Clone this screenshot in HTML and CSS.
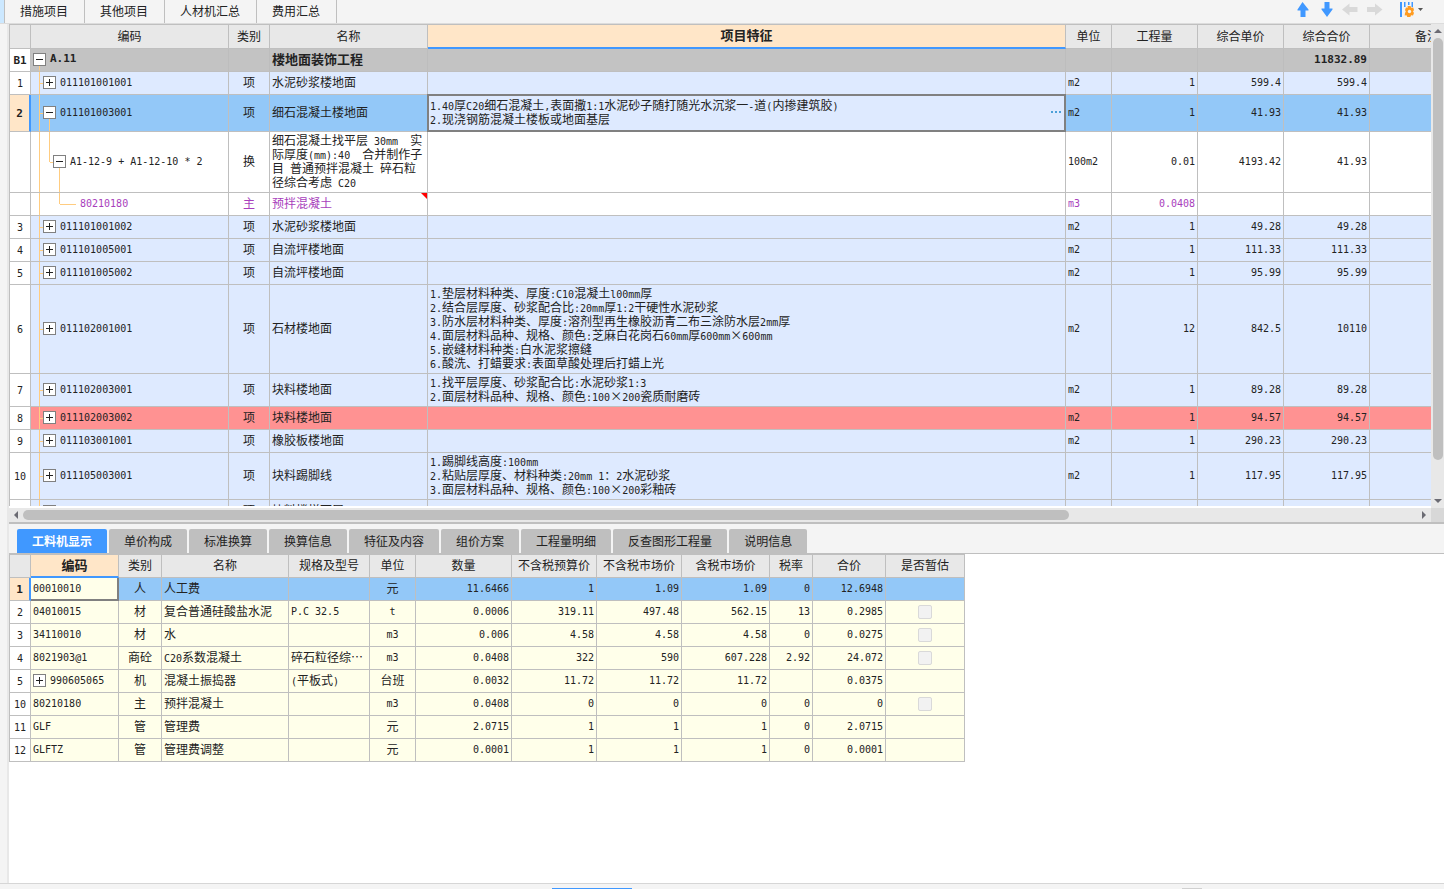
FILE: index.html
```html
<!DOCTYPE html>
<html lang="zh-CN">
<head>
<meta charset="utf-8">
<title>分部分项</title>
<link rel="stylesheet" href="styles.css">
</head>
<body>
<header class="toolbar">
  <nav class="nav">
    <span class="nav-edge"></span>
    <button type="button">措施项目</button>
    <button type="button">其他项目</button>
    <button type="button">人材机汇总</button>
    <button type="button">费用汇总</button>
  </nav>
  <div class="tools">
    <button type="button" aria-label="上移"><svg width="12" height="16" viewBox="0 0 12 16"><path fill="#4098ff" d="M5.500 1L11.500 8.500V9.500H8.500V16H3.500V9.500H.5V8.500z"/></svg></button>
    <button type="button" aria-label="下移"><svg width="12" height="16" viewBox="0 0 12 16"><path fill="#4098ff" d="M3.500 1H8.500V7.500H11.500V8.500L6 16L.5 8.500V7.500H3.500z"/></svg></button>
    <button type="button" aria-label="左移"><svg width="16" height="16" viewBox="0 0 16 16"><path fill="#d9d9d9" d="M0 8.500L7.500 2.500V6H15.500V11H7.500V14.500z"/></svg></button>
    <button type="button" aria-label="右移"><svg width="16" height="16" viewBox="0 0 16 16"><path fill="#d9d9d9" d="M15.500 8.500L8 2.500V6H0V11H8V14.500z"/></svg></button>
    <button type="button" aria-label="列设置"><svg width="24" height="16" viewBox="0 0 24 16"><path fill="#4098ff" d="M0 1h2v15H0zM4 1h1.500v5H4zM8 1h1.500v3H8zM11.500 1H13v5h-1.500z"/><path fill="#ff9c22" d="M7.500 5h3l.8 1.700 1.900-.2L14 9l-1 1.500 1 1.500-1 2.400-1.900-.1-.8 1.700h-3l-.8-1.700-1.800.1L5 12l.8-1.500L5 9l1-2.400 1.800.1z"/><circle cx="9.500" cy="10.500" r="1.700" fill="#f4f4f4"/><path fill="#555" d="M18 7h5l-2.500 3z"/></svg></button>
  </div>
</header>

<main class="body">
  <aside class="rail"></aside>
  <div class="panes">
    <section class="upper">
      <div class="viewport">
        <table class="sheet main-sheet">
          <colgroup><col class="w-idx"><col class="w-code"><col class="w-kind"><col class="w-name"><col><col class="w-unit"><col class="w-amt"><col class="w-amt"><col class="w-amt"><col class="w-note"></colgroup>
          <thead>
            <tr><th></th><th>编码</th><th>类别</th><th>名称</th><th class="active">项目特征</th><th>单位</th><th>工程量</th><th>综合单价</th><th>综合合价</th><th>备注</th></tr>
          </thead>
          <tbody>
            <tr class="group"><th class="n">B1</th><td class="tree root"><button class="box minus" type="button" aria-label="收起"></button><span class="n">A.11</span></td><td></td><td>楼地面装饰工程</td><td></td><td></td><td></td><td></td><td class="r n">11832.89</td><td></td></tr>
            <tr><th class="n">1</th><td class="tree lv1"><button class="box plus" type="button" aria-label="展开"></button><span class="n">011101001001</span></td><td class="c">项</td><td>水泥砂浆楼地面</td><td></td><td class="n">m2</td><td class="r n">1</td><td class="r n">599.4</td><td class="r n">599.4</td><td></td></tr>
            <tr class="selected tall"><th class="n current">2</th><td class="tree lv1 open"><button class="box minus" type="button" aria-label="收起"></button><span class="n">011101003001</span></td><td class="c">项</td><td>细石混凝土楼地面</td><td class="editing"><div class="edit"><span><i class="n">1.40</i>厚<i class="n">C20</i>细石混凝土<i class="n">,</i>表面撒<i class="n">1:1</i>水泥砂子随打随光水沉浆一<i class="n">-</i>道<i class="n">(</i>内掺建筑胶<i class="n">)</i><br><i class="n">2.</i>现浇钢筋混凝土楼板或地面基层</span><button class="more" type="button" aria-label="更多"><svg width="12" height="4" viewBox="0 0 12 4"><path fill="#4ba0d8" d="M0 1h2v2H0zM4 1h2v2H4zM8 1h2v2H8z"/></svg></button></div></td><td class="n">m2</td><td class="r n">1</td><td class="r n">41.93</td><td class="r n">41.93</td><td></td></tr>
            <tr class="plain"><th></th><td class="tree lv2"><button class="box minus" type="button" aria-label="收起"></button><span class="n">A1-12-9 + A1-12-10 * 2</span></td><td class="c">换</td><td>细石混凝土找平层<i class="n"> 30mm  </i>实<br>际厚度<i class="n">(mm):40  </i>合并制作子<br>目<i class="n"> </i>普通预拌混凝土<i class="n"> </i>碎石粒<br>径综合考虑<i class="n"> C20</i></td><td></td><td class="n">100m2</td><td class="r n">0.01</td><td class="r n">4193.42</td><td class="r n">41.93</td><td></td></tr>
            <tr class="plain material"><th></th><td class="tree lv3"><span class="n">80210180</span></td><td class="c">主</td><td class="flag">预拌混凝土</td><td></td><td class="n">m3</td><td class="r n">0.0408</td><td></td><td></td><td></td></tr>
            <tr><th class="n">3</th><td class="tree lv1"><button class="box plus" type="button" aria-label="展开"></button><span class="n">011101001002</span></td><td class="c">项</td><td>水泥砂浆楼地面</td><td></td><td class="n">m2</td><td class="r n">1</td><td class="r n">49.28</td><td class="r n">49.28</td><td></td></tr>
            <tr><th class="n">4</th><td class="tree lv1"><button class="box plus" type="button" aria-label="展开"></button><span class="n">011101005001</span></td><td class="c">项</td><td>自流坪楼地面</td><td></td><td class="n">m2</td><td class="r n">1</td><td class="r n">111.33</td><td class="r n">111.33</td><td></td></tr>
            <tr><th class="n">5</th><td class="tree lv1"><button class="box plus" type="button" aria-label="展开"></button><span class="n">011101005002</span></td><td class="c">项</td><td>自流坪楼地面</td><td></td><td class="n">m2</td><td class="r n">1</td><td class="r n">95.99</td><td class="r n">95.99</td><td></td></tr>
            <tr><th class="n">6</th><td class="tree lv1"><button class="box plus" type="button" aria-label="展开"></button><span class="n">011102001001</span></td><td class="c">项</td><td>石材楼地面</td><td><i class="n">1.</i>垫层材料种类、厚度<i class="n">:C10</i>混凝土<i class="n">l00mm</i>厚<br><i class="n">2.</i>结合层厚度、砂浆配合比<i class="n">:20mm</i>厚<i class="n">1:2</i>干硬性水泥砂浆<br><i class="n">3.</i>防水层材料种类、厚度<i class="n">:</i>溶剂型再生橡胶沥青二布三涂防水层<i class="n">2mm</i>厚<br><i class="n">4.</i>面层材料品种、规格、颜色<i class="n">:</i>芝麻白花岗石<i class="n">60mm</i>厚<i class="n">600mm</i><i class="x">×</i><i class="n">600mm</i><br><i class="n">5.</i>嵌缝材料种类<i class="n">:</i>白水泥浆擦缝<br><i class="n">6.</i>酸洗、打蜡要求<i class="n">:</i>表面草酸处理后打蜡上光</td><td class="n">m2</td><td class="r n">12</td><td class="r n">842.5</td><td class="r n">10110</td><td></td></tr>
            <tr><th class="n">7</th><td class="tree lv1"><button class="box plus" type="button" aria-label="展开"></button><span class="n">011102003001</span></td><td class="c">项</td><td>块料楼地面</td><td><i class="n">1.</i>找平层厚度、砂浆配合比<i class="n">:</i>水泥砂浆<i class="n">1:3</i><br><i class="n">2.</i>面层材料品种、规格、颜色<i class="n">:100</i><i class="x">×</i><i class="n">200</i>瓷质耐磨砖</td><td class="n">m2</td><td class="r n">1</td><td class="r n">89.28</td><td class="r n">89.28</td><td></td></tr>
            <tr class="alert"><th class="n">8</th><td class="tree lv1"><button class="box plus" type="button" aria-label="展开"></button><span class="n">011102003002</span></td><td class="c">项</td><td>块料楼地面</td><td></td><td class="n">m2</td><td class="r n">1</td><td class="r n">94.57</td><td class="r n">94.57</td><td></td></tr>
            <tr><th class="n">9</th><td class="tree lv1"><button class="box plus" type="button" aria-label="展开"></button><span class="n">011103001001</span></td><td class="c">项</td><td>橡胶板楼地面</td><td></td><td class="n">m2</td><td class="r n">1</td><td class="r n">290.23</td><td class="r n">290.23</td><td></td></tr>
            <tr><th class="n">10</th><td class="tree lv1"><button class="box plus" type="button" aria-label="展开"></button><span class="n">011105003001</span></td><td class="c">项</td><td>块料踢脚线</td><td><i class="n">1.</i>踢脚线高度<i class="n">:100mm</i><br><i class="n">2.</i>粘贴层厚度、材料种类<i class="n">:20mm 1</i>：<i class="n">2</i>水泥砂浆<br><i class="n">3.</i>面层材料品种、规格、颜色<i class="n">:100</i><i class="x">×</i><i class="n">200</i>彩釉砖</td><td class="n">m2</td><td class="r n">1</td><td class="r n">117.95</td><td class="r n">117.95</td><td></td></tr>
            <tr><th></th><td class="tree lv1"><button class="box plus" type="button" aria-label="展开"></button></td><td class="c">项</td><td>块料楼梯面层</td><td></td><td></td><td></td><td></td><td></td><td></td></tr>
          </tbody>
        </table>
      </div>
      <div class="vbar"><span class="tri up"></span><span class="thumb"></span><span class="tri down"></span></div>
      <div class="hbar"><span class="tri left"></span><span class="track"><span class="thumb"></span></span><span class="tri right"></span></div>
      <div class="corner"></div>
    </section>

    <section class="lower">
      <nav class="tabs">
        <button class="on" type="button">工料机显示</button>
        <button type="button">单价构成</button>
        <button type="button">标准换算</button>
        <button type="button">换算信息</button>
        <button type="button">特征及内容</button>
        <button type="button">组价方案</button>
        <button type="button">工程量明细</button>
        <button type="button">反查图形工程量</button>
        <button type="button">说明信息</button>
      </nav>
      <table class="sheet detail-sheet">
        <colgroup><col class="w-idx"><col class="d-code"><col class="d-kind"><col class="d-name"><col class="d-spec"><col class="w-unit"><col class="d-qty"><col class="d-price"><col class="d-price"><col class="d-code"><col class="d-kind"><col class="d-sum"><col class="d-est"></colgroup>
        <thead>
          <tr><th></th><th class="active">编码</th><th>类别</th><th>名称</th><th>规格及型号</th><th>单位</th><th>数量</th><th>不含税预算价</th><th>不含税市场价</th><th>含税市场价</th><th>税率</th><th>合价</th><th>是否暂估</th></tr>
        </thead>
        <tbody>
          <tr class="selected"><th class="n current">1</th><td class="n focus">00010010</td><td class="c">人</td><td>人工费</td><td></td><td class="c">元</td><td class="r n">11.6466</td><td class="r n">1</td><td class="r n">1.09</td><td class="r n">1.09</td><td class="r n">0</td><td class="r n">12.6948</td><td></td></tr>
          <tr><th class="n">2</th><td class="n">04010015</td><td class="c">材</td><td>复合普通硅酸盐水泥</td><td class="n">P.C 32.5</td><td class="c n">t</td><td class="r n">0.0006</td><td class="r n">319.11</td><td class="r n">497.48</td><td class="r n">562.15</td><td class="r n">13</td><td class="r n">0.2985</td><td class="c"><input type="checkbox" aria-label="是否暂估" disabled></td></tr>
          <tr><th class="n">3</th><td class="n">34110010</td><td class="c">材</td><td>水</td><td></td><td class="c n">m3</td><td class="r n">0.006</td><td class="r n">4.58</td><td class="r n">4.58</td><td class="r n">4.58</td><td class="r n">0</td><td class="r n">0.0275</td><td class="c"><input type="checkbox" aria-label="是否暂估" disabled></td></tr>
          <tr><th class="n">4</th><td class="n">8021903@1</td><td class="c">商砼</td><td><i class="n">C20</i>系数混凝土</td><td>碎石粒径综⋯</td><td class="c n">m3</td><td class="r n">0.0408</td><td class="r n">322</td><td class="r n">590</td><td class="r n">607.228</td><td class="r n">2.92</td><td class="r n">24.072</td><td class="c"><input type="checkbox" aria-label="是否暂估" disabled></td></tr>
          <tr><th class="n">5</th><td class="tree"><button class="box plus" type="button" aria-label="展开"></button><span class="n">990605065</span></td><td class="c">机</td><td>混凝土振捣器</td><td><i class="n">(</i>平板式<i class="n">)</i></td><td class="c">台班</td><td class="r n">0.0032</td><td class="r n">11.72</td><td class="r n">11.72</td><td class="r n">11.72</td><td></td><td class="r n">0.0375</td><td></td></tr>
          <tr><th class="n">10</th><td class="n">80210180</td><td class="c">主</td><td>预拌混凝土</td><td></td><td class="c n">m3</td><td class="r n">0.0408</td><td class="r n">0</td><td class="r n">0</td><td class="r n">0</td><td class="r n">0</td><td class="r n">0</td><td class="c"><input type="checkbox" aria-label="是否暂估" disabled></td></tr>
          <tr><th class="n">11</th><td class="n">GLF</td><td class="c">管</td><td>管理费</td><td></td><td class="c">元</td><td class="r n">2.0715</td><td class="r n">1</td><td class="r n">1</td><td class="r n">1</td><td class="r n">0</td><td class="r n">2.0715</td><td></td></tr>
          <tr><th class="n">12</th><td class="n">GLFTZ</td><td class="c">管</td><td>管理费调整</td><td></td><td class="c">元</td><td class="r n">0.0001</td><td class="r n">1</td><td class="r n">1</td><td class="r n">1</td><td class="r n">0</td><td class="r n">0.0001</td><td></td></tr>
        </tbody>
      </table>
    </section>
  </div>
</main>
<footer class="status"><span class="mark blue"></span><span class="mark gray"></span></footer>
</body>
</html>
```
FILE: styles.css
```css
:root {
  --line: #bfbfbf;
  --blue: #4098ff;
  --peach: #ffe6c8;
  --row: #deeaff;
  --guide: #ffcc80;
}
* { box-sizing: border-box; }
body {
  margin: 0;
  height: 100vh;
  display: flex;
  flex-direction: column;
  overflow: hidden;
  background: #f4f4f4;
  color: #222;
  font: 12px/14px "Noto Sans CJK SC", sans-serif;
}
button {
  margin: 0;
  padding: 0;
  border: 0;
  background: none;
  color: inherit;
  font: inherit;
}
svg { display: block; }
i { font-style: normal; }

/* toolbar */
.toolbar {
  flex: 0 0 24px;
  display: flex;
  justify-content: space-between;
  border-bottom: 1px solid #dcdcdc;
}
.nav { display: flex; }
.nav-edge { width: 5px; background: #cce8ff; border-right: 1px solid var(--line); }
.nav button { padding: 0 16px 2px 15px; border-right: 1px solid var(--line); }
.tools { display: flex; align-items: flex-start; gap: 9px; padding: 1px 20px 0 0; }
.tools button:first-child { margin-right: 3px; }
.tools button:last-child { margin-left: 8px; }

/* panes */
.body { flex: 1; display: flex; min-height: 0; }
.rail { flex: 0 0 9px; border-right: 2px solid #e8e8e8; }
.panes { flex: 1; display: flex; flex-direction: column; min-width: 0; }
.upper {
  flex: 498 1 0;
  min-height: 0;
  display: grid;
  grid-template: minmax(0, 1fr) 14px / minmax(0, 1fr) 13px;
  border-bottom: 2px solid var(--line);
}
.viewport { overflow: hidden; border-bottom: 2px solid #fff; }
.lower { flex: 359 1 0; min-height: 0; overflow: hidden; background: #fff; }

/* sheets */
.sheet {
  table-layout: fixed;
  border-spacing: 0;
  border-top: 1px solid var(--line);
}
.main-sheet { width: calc(100% + 54px); }
.detail-sheet { width: 956px; }
.w-idx { width: 22px; }
.w-code { width: 198px; }
.w-kind { width: 41px; }
.w-name { width: 158px; }
.w-unit { width: 46px; }
.w-amt { width: 86px; }
.w-note { width: 115px; }
.d-code { width: 88px; }
.d-kind { width: 43px; }
.d-name { width: 127px; }
.d-spec { width: 81px; }
.d-qty { width: 96px; }
.d-price { width: 85px; }
.d-sum { width: 73px; }
.d-est { width: 79px; }

.sheet tr { height: 23px; }
.main-sheet thead tr { height: 24px; }
.sheet tr.tall { height: 37px; }
.sheet th, .sheet td {
  padding: 1px 2px 3px;
  border-right: 1px solid var(--line);
  border-bottom: 1px solid var(--line);
  text-align: left;
  vertical-align: middle;
  white-space: pre;
  font-weight: normal;
}
.sheet td.n { padding: 2px; }
.sheet th { padding: 2px 0 0; text-align: center; }
.sheet thead th { padding: 0 0 2px; }
.sheet th:first-child { border-left: 1px solid var(--line); }
.sheet thead th { background: #e8e8e8; }
.sheet thead th.active {
  background: var(--peach);
  border-bottom: 2px solid var(--blue);
  font-size: 13px;
  font-weight: bold;
}
.main-sheet td { background-color: var(--row); }
.detail-sheet td { background-color: #ffffea; }
.sheet tbody th { background: #fff; }
.sheet .c { text-align: center; }
.sheet .r { text-align: right; }
.n { font-family: "DejaVu Sans Mono", monospace; font-size: 10px; }
i.n { line-height: 10px; }
.x { display: inline-block; width: 12px; text-align: center; }

.sheet .group td { background-color: #c3c3c3; border-right-color: #bdbdbd; font-size: 13px; font-weight: bold; }
.sheet .group .n { font-size: 11px; font-weight: bold; }
.sheet .selected td { background-color: #93c8f8; }
.sheet .plain td { background-color: #fff; }
.sheet .alert td { background-color: #ff9292; }
.sheet .material td { color: #a83ebc; }
.sheet th.current {
  background: var(--peach);
  border-right: 2px solid var(--blue);
  font-size: 11px;
  font-weight: bold;
}

.sheet td.editing, .sheet td.focus, .flag { position: relative; }
.sheet td.editing { background-color: var(--row); }
.editing::after {
  content: "";
  position: absolute;
  inset: -1px;
  border: 2px solid #808080;
  pointer-events: none;
}
.edit { display: flex; align-items: center; justify-content: space-between; }
.sheet td.focus { background-color: #ffffea; }
.focus::after {
  content: "";
  position: absolute;
  inset: 0 -1px -1px 0;
  border: solid #808080;
  border-width: 0 2px 2px 0;
}
.flag::after {
  content: "";
  position: absolute;
  top: 0;
  right: 0;
  border-top: 6px solid #f00;
  border-left: 6px solid transparent;
}

/* tree */
.box {
  width: 13px;
  height: 13px;
  margin-right: 4px;
  border: 1px solid #808080;
  vertical-align: middle;
  background: linear-gradient(#222, #222) center / 7px 1px no-repeat, #fff;
}
.box.plus {
  background: linear-gradient(#222, #222) center / 7px 1px no-repeat, linear-gradient(#222, #222) center / 1px 7px no-repeat, #fff;
}
.tree .n { vertical-align: middle; }
.tree {
  --g: linear-gradient(var(--guide), var(--guide));
  background-repeat: no-repeat;
}
.sheet td.root { background-image: var(--g); background-position: 8px 100%; background-size: 1px 30%; }
.sheet td.lv1 {
  padding-left: 12px;
  background-image: var(--g), var(--g);
  background-position: 8px 0, 9px 50%;
  background-size: 1px 100%, 4px 1px;
}
.sheet td.open {
  background-image: var(--g), var(--g), var(--g);
  background-position: 8px 0, 9px 50%, 18px 100%;
  background-size: 1px 100%, 4px 1px, 1px 50%;
}
.sheet td.lv2 {
  padding-left: 22px;
  background-image: var(--g), var(--g), var(--g), var(--g);
  background-position: 8px 0, 18px 0, 19px 50%, 28px 100%;
  background-size: 1px 100%, 1px 50%, 4px 1px, 1px 50%;
}
.sheet td.lv3 {
  padding-left: 49px;
  background-image: var(--g), var(--g), var(--g);
  background-position: 8px 0, 28px 0, 29px 50%;
  background-size: 1px 100%, 1px 50%, 16px 1px;
}

input[type="checkbox"] {
  appearance: none;
  width: 14px;
  height: 14px;
  margin: 0;
  border: 1px solid #d9d9d9;
  border-radius: 2px;
  background: #f2f2f2;
  vertical-align: middle;
}

/* scroll bars */
.vbar, .hbar { display: flex; align-items: center; background: #e8e8e8; }
.vbar { flex-direction: column; padding: 5px 0; }
.hbar { padding: 0 5px; }
.vbar .thumb { width: 10px; flex: 0 0 89%; margin: 5px 0 auto; }
.track { flex: 1; margin: 0 5px; }
.hbar .thumb { display: block; width: 75%; height: 10px; }
.thumb { border-radius: 5px; background: var(--line); }
.tri { border: 4px solid transparent; }
.tri.up { border-top: 0; border-bottom-color: #6b6b73; }
.tri.down { border-bottom: 0; border-top-color: #6b6b73; }
.tri.left { border-left: 0; border-right-color: #6b6b73; }
.tri.right { border-right: 0; border-left-color: #6b6b73; }
.corner { background: #d8d8d8; }

/* lower tabs */
.tabs {
  display: flex;
  gap: 2px;
  padding: 5px 8px 0;
  background: #f4f4f4;
  border-bottom: 1px solid var(--line);
}
.tabs button {
  height: 24px;
  padding: 0 15px;
  border-radius: 2px 2px 0 0;
  background: var(--line);
}
.tabs .on { background: var(--blue); color: #fff; font-weight: bold; }

.status {
  flex: 0 0 6px;
  display: flex;
  align-items: flex-end;
  border-top: 1px solid #d6d6d6;
}
.mark { height: 1px; }
.blue { width: 80px; margin-left: 38.2%; background: var(--blue); }
.gray { width: 20px; margin-left: 38.1%; background: #d0d0d0; }
```
